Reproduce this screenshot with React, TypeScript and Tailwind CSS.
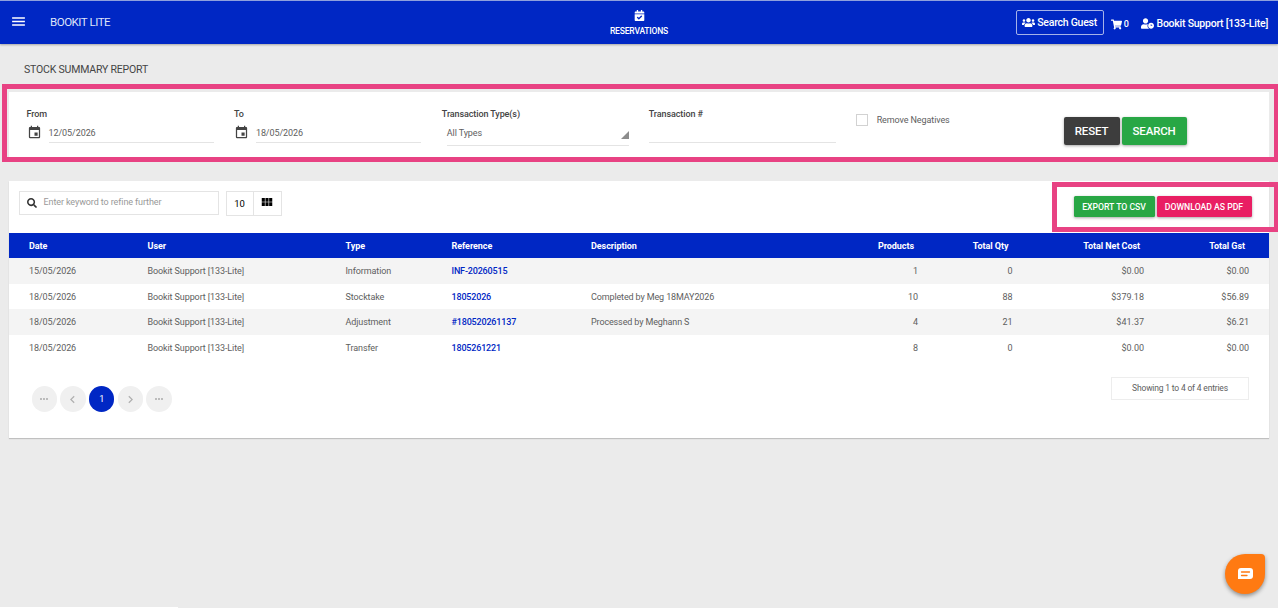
import type { ReactNode } from "react";
import { MdMenu, MdEvent, MdViewModule, MdChevronLeft, MdChevronRight, MdMoreHoriz } from "react-icons/md";
import { FaUsers, FaShoppingCart, FaUserClock, FaCalendarCheck, FaSearch } from "react-icons/fa";

const rows = [
  ["15/05/2026", "Bookit Support [133-Lite]", "Information", "INF-20260515", "", "1", "0", "$0.00", "$0.00"],
  ["18/05/2026", "Bookit Support [133-Lite]", "Stocktake", "18052026", "Completed by Meg 18MAY2026", "10", "88", "$379.18", "$56.89"],
  ["18/05/2026", "Bookit Support [133-Lite]", "Adjustment", "#180520261137", "Processed by Meghann S", "4", "21", "$41.37", "$6.21"],
  ["18/05/2026", "Bookit Support [133-Lite]", "Transfer", "1805261221", "", "8", "0", "$0.00", "$0.00"],
];

const heads = ["Date", "User", "Type", "Reference", "Description", "Products", "Total Qty", "Total Net Cost", "Total Gst"];

const grid = "grid grid-cols-[118.5px_198px_106px_139.5px_238px_89px_94.5px_131.5px_105px] pl-5 items-center";

function DateField({ label, value }: { label: string; value: string }) {
  return (
    <div className="pl-[10px] pt-[16px]">
      <div className="h-[13px] text-[9px] leading-[13px] font-medium text-[#444]">{label}</div>
      <div className="flex pt-[4px]">
        <MdEvent className="size-[15px] text-[#444]" />
        <div className="ml-[7px] h-[18px] w-[165px] border-b border-[#e4e4e4] pt-[1px] text-[9px] leading-[14px] tracking-[-0.08px]">{value}</div>
      </div>
    </div>
  );
}

function PageDot({ children, active = false }: { children: ReactNode; active?: boolean }) {
  return (
    <button
      className={
        active
          ? "flex size-[25.5px] items-center justify-center rounded-full bg-[#0027c4] pt-[1px] text-[9px] text-white"
          : "flex size-[25.5px] items-center justify-center rounded-full bg-[#f0f0f0] text-[#b0b0b0]"
      }
    >
      {children}
    </button>
  );
}

export default function App() {
  return (
    <div className="relative h-[608px] w-[1278px] overflow-hidden bg-[#ebebeb] font-['Roboto',sans-serif] text-[9px] tracking-[-0.1px] text-[#5e5e5e]">
      <header className="grid h-[44px] grid-cols-[1fr_auto_1fr] border-t border-[#8fa0dd] bg-[#0027c4] text-white shadow-[0_1px_2px_rgba(0,0,0,0.3)]">
        <div className="flex">
          <MdMenu className="mt-[12px] ml-[10px] size-[17px]" />
          <span className="mt-[14px] ml-[23px] text-[11.5px] leading-[15px] tracking-[-0.46px] text-[#dfe4f8]">BOOKIT LITE</span>
        </div>
        <div className="flex flex-col items-center">
          <FaCalendarCheck className="mt-[9px] ml-px size-[11px]" />
          <span className="mt-[4px] text-[8.5px] leading-[13px] font-medium tracking-[-0.18px]">RESERVATIONS</span>
        </div>
        <div className="flex justify-end pr-[10px] text-[10.5px] leading-[15px] font-medium tracking-[-0.24px]">
          <div className="mt-[9px] flex h-[25px] w-[88px] items-center justify-center gap-[2px] rounded-[2px] border border-[#a5b2e8]">
            <FaUsers className="size-[13px]" />
            <span>Search Guest</span>
          </div>
          <div className="mt-[14px] ml-[7px] flex items-center gap-[2px] self-start">
            <FaShoppingCart className="mt-[1px] size-[11px]" />
            <span className="pt-[2px] text-[9px]">0</span>
          </div>
          <div className="mt-[15px] ml-[12px] flex items-center gap-[3px] self-start">
            <FaUserClock className="size-[13px]" />
            <span>Bookit Support [133-Lite]</span>
          </div>
        </div>
      </header>

      <h1 className="mt-[18px] ml-6 h-[30px] text-[10.5px] leading-[15px] tracking-[-0.18px] text-[#444]">STOCK SUMMARY REPORT</h1>

      <section className="mx-[9px] grid h-[65px] grid-cols-6 bg-white pr-[8px] pl-[7.5px]">
        <DateField label="From" value="12/05/2026" />
        <DateField label="To" value="18/05/2026" />
        <div className="pt-[16px] pl-[10.5px]">
          <div className="text-[9px] leading-[13px] font-medium text-[#444]">Transaction Type(s)</div>
          <div className="ml-[5px] flex h-[25px] w-[182px] items-start justify-between border-b border-[#e4e4e4] pt-[5px] leading-[14px]">
            <span>All Types</span>
            <svg className="mt-[5px] size-[8px]" viewBox="0 0 8 8">
              <path d="M8 0v8H0z" fill="#8d8d8d" />
            </svg>
          </div>
        </div>
        <div className="pt-[16px] pl-[10px]">
          <div className="text-[9px] leading-[13px] font-medium text-[#444]">Transaction #</div>
          <div className="h-[22px] w-[187px] border-b border-[#e4e4e4]" />
        </div>
        <label className="flex items-start gap-[8.5px] pt-[22px] pl-[10px] leading-[13px]">
          <span className="size-[12px] border border-[#d2d2d2] bg-white" />
          <span>Remove Negatives</span>
        </label>
        <div className="flex gap-[2px] pt-[25px] pl-[10px] text-[11.5px] font-medium tracking-[-0.15px] text-white">
          <button className="h-[28px] w-[56px] rounded-[2px] bg-[#3d3d3d] pt-[1px] shadow-[0_1px_3px_rgba(0,0,0,0.35)]">RESET</button>
          <button className="h-[28px] w-[65px] rounded-[2px] bg-[#28a745] pt-[1px] shadow-[0_1px_3px_rgba(0,0,0,0.35)]">SEARCH</button>
        </div>
      </section>

      <section className="mx-[9px] mt-[24px] h-[257px] bg-white shadow-[0_1px_1px_rgba(0,0,0,0.18)]">
        <div className="flex h-[51.5px] items-start pt-[10px] pl-[10px]">
          <div className="flex h-[24px] w-[200px] items-center border border-[#e4e4e4] pl-[7px]">
            <FaSearch className="size-[10px] text-[#333]" />
            <span className="ml-[6.5px] text-[#999]">Enter keyword to refine further</span>
          </div>
          <div className="ml-[7px] flex h-[25px] w-[56px] border border-[#e4e4e4] text-black">
            <div className="flex w-[27px] items-center justify-center border-r border-[#e4e4e4] pt-[2px] pr-[1px] text-[9.5px]">10</div>
            <div className="flex flex-1 items-center justify-center pr-[1px] pb-[3px]">
              <MdViewModule className="size-[14px]" />
            </div>
          </div>
          <div className="mt-[5px] mr-[17.5px] ml-auto flex gap-[2px] text-[8.7px] font-medium tracking-[-0.02px] text-white">
            <button className="h-[21px] w-[81px] rounded-[1.5px] bg-[#28a745] pt-[2px] shadow-[0_1px_3px_rgba(0,0,0,0.35)]">EXPORT TO CSV</button>
            <button className="h-[21px] w-[95px] rounded-[1.5px] bg-[#e91e63] pt-[2px] shadow-[0_1px_3px_rgba(0,0,0,0.35)]">DOWNLOAD AS PDF</button>
          </div>
        </div>
        <div className={`${grid} h-[25.5px] bg-[#0027c4] pt-[2px] font-bold tracking-[-0.05px] text-white`}>
          {heads.map((h, i) => (
            <div key={h} className={i > 4 ? "pr-[4px] text-right" : ""}>{h}</div>
          ))}
        </div>
        {rows.map((r, n) => (
          <div key={n} className={`${grid} h-[25.7px] pt-[2px] ${n % 2 ? "bg-white" : "bg-[#f4f4f4]"}`}>
            {r.map((c, i) => (
              <div
                key={i}
                className={
                  i > 4
                    ? "text-right tracking-normal"
                    : i === 3
                      ? "font-medium tracking-[-0.17px] text-[#0027c4]"
                      : i === 0
                        ? "tracking-[-0.08px]"
                        : i === 4
                          ? "tracking-[-0.13px]"
                          : ""
                }
              >
                {c}
              </div>
            ))}
          </div>
        ))}
        <div className="flex justify-between pt-[16px] pr-[20px] pl-[22.5px]">
          <div className="flex gap-[3.2px] pt-[9.5px]">
            <PageDot><MdMoreHoriz className="size-[12px]" /></PageDot>
            <PageDot><MdChevronLeft className="size-[15px]" /></PageDot>
            <PageDot active>1</PageDot>
            <PageDot><MdChevronRight className="size-[15px]" /></PageDot>
            <PageDot><MdMoreHoriz className="size-[12px]" /></PageDot>
          </div>
          <div className="flex h-[23px] w-[138px] items-center justify-center border border-[#ededed] text-[8.5px] tracking-[-0.18px]">Showing 1 to 4 of 4 entries</div>
        </div>
      </section>

      <div className="absolute top-[84px] left-[2px] h-[78px] w-[1276px] border-[5px] border-r-4 border-[#e84283]" />
      <div className="absolute top-[182px] left-[1052px] h-[50px] w-[226px] border-[5px] border-r-4 border-[#e84283]" />

      <button className="absolute top-[553.5px] left-[1225px] flex size-[40px] items-center justify-center rounded-[50%_4px_50%_50%] bg-[#ff7a12] shadow-[0_2px_4px_rgba(0,0,0,0.4)]">
        <svg className="size-[17px]" viewBox="0 0 17 17">
          <path d="M4 3h9a3 3 0 0 1 3 3v5a3 3 0 0 1-3 3H1V6a3 3 0 0 1 3-3z" fill="#fff" />
          <path d="M4.500 7h8M4.500 10.500h5.500" stroke="#ff7a12" strokeWidth="1.300" strokeLinecap="round" />
        </svg>
      </button>
      <div className="absolute bottom-0 left-0 h-px w-[178px] bg-white" />
    </div>
  );
}
